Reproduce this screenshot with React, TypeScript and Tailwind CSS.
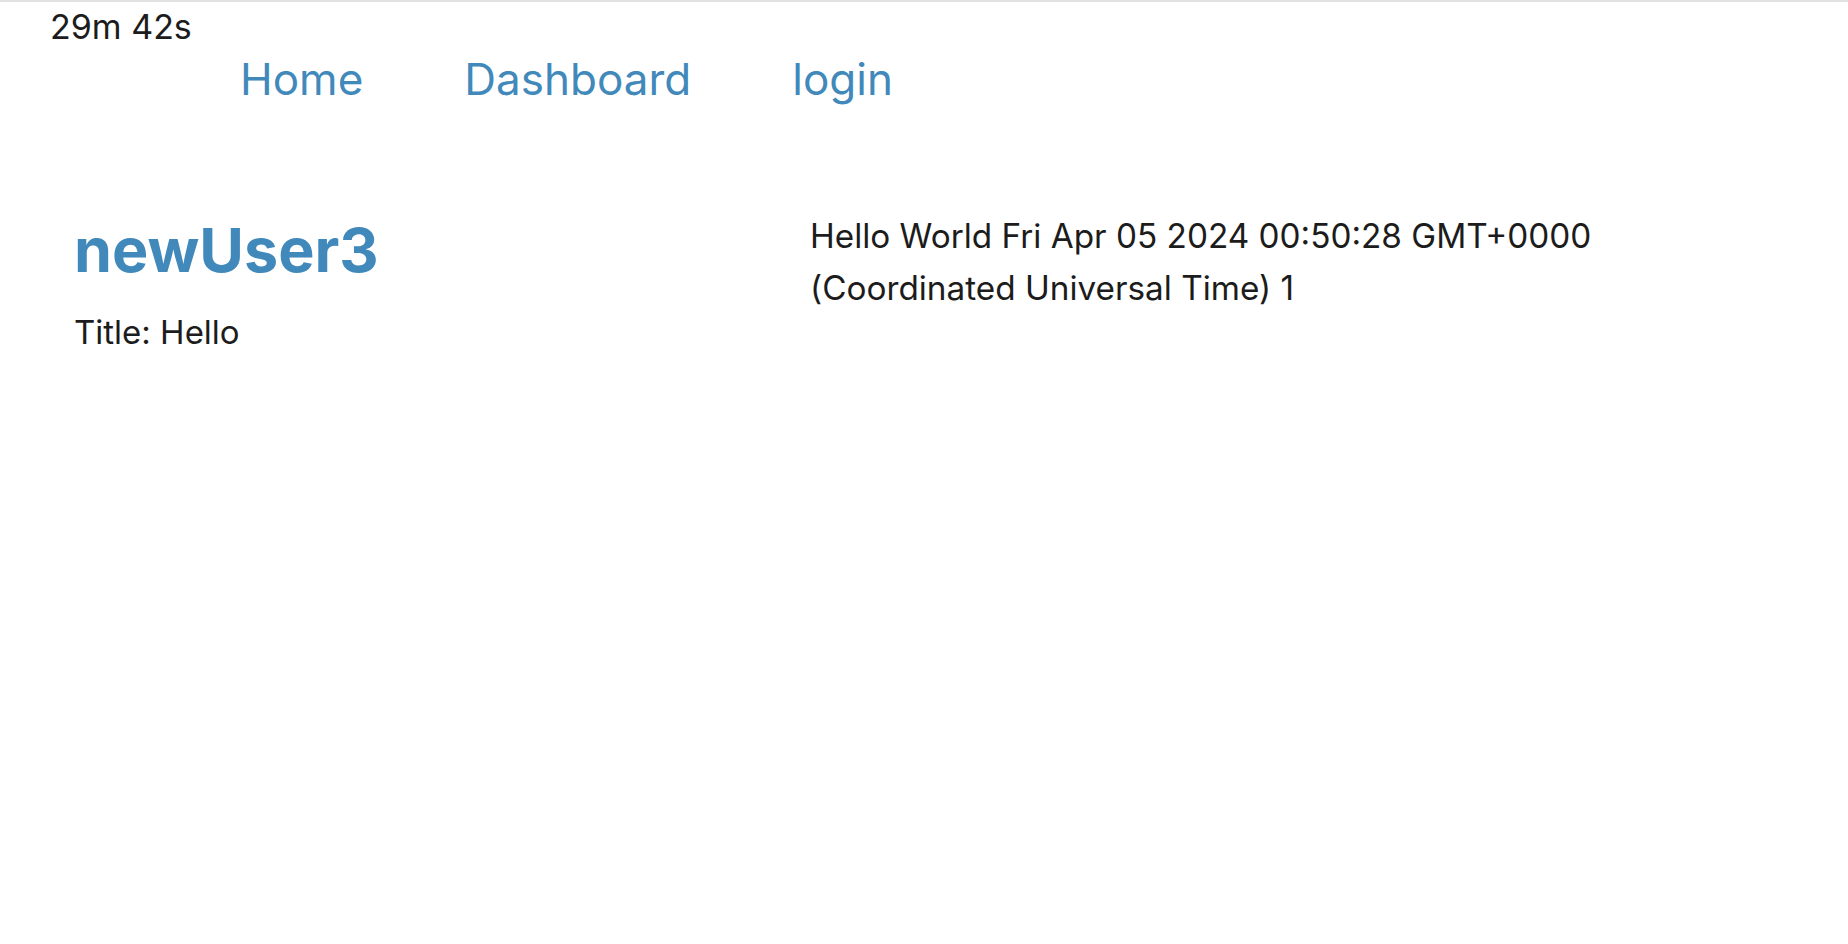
export default function App() {
  return (
    <div className="min-h-screen bg-white text-[#1c1c1c]" style={{ fontFamily: 'Inter, "Liberation Sans", sans-serif' }}>
      <div className="h-[2px] bg-[#e2e2e2]" />
      <div className="pl-[50px] mt-[6px] text-[34px] leading-[38px]">29m 42s</div>
      <nav className="flex gap-[101px] pl-[240px] mt-[7px] text-[44px] leading-[52px] text-[#4189bb]">
        <a href="#">Home</a>
        <a href="#">Dashboard</a>
        <a href="#">login</a>
      </nav>
      <div className="grid grid-cols-[736px_1fr] px-[74px] mt-[105px]">
        <div>
          <h1 className="mt-[3px] text-[61px] leading-[74px] font-bold text-[#4189bb]">newUser3</h1>
          <p className="mt-[23px] text-[33px] leading-[44px]">Title: Hello</p>
        </div>
        <div className="max-w-[880px] text-[33.3px] leading-[52px]">
          Hello World Fri Apr 05 2024 00:50:28 GMT+0000 (Coordinated Universal Time) 1
        </div>
      </div>
    </div>
  );
}
